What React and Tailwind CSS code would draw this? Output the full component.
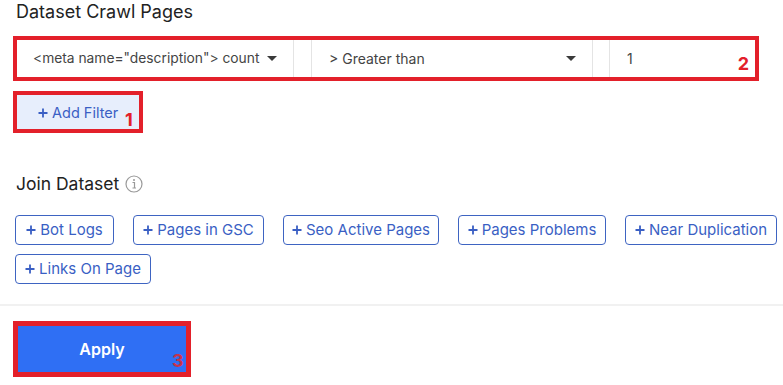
import React from "react";

const Caret = () => (
  <svg width="10" height="6" viewBox="0 0 10 6" className="shrink-0">
    <path d="M0 0 L10 0 L5 5 Z" fill="#3a3a3a" />
  </svg>
);

const Plus = () => (
  <svg width="10" height="10" viewBox="0 0 10 10" className="shrink-0">
    <path d="M5 0.5 V9.5 M0.5 5 H9.5" stroke="currentColor" strokeWidth="1.8" />
  </svg>
);

const JoinBtn = ({ label, w }) => (
  <button className={`h-[30px] ${w} border border-[#3e64c2] rounded-[4px] text-[15px] text-[#3a5fc4] flex items-center justify-center gap-[4px] bg-white`}>
    <Plus />
    <span>{label}</span>
  </button>
);

export default function App() {
  const font = { fontFamily: "Inter, 'Noto Sans', sans-serif" };
  return (
    <div className="w-[783px] h-[385px] bg-white relative overflow-hidden" style={font}>
      <div className="pl-[15px] pr-[4px]">
        <h1 className="text-[18px] leading-[24px] text-[#222] pl-[1px]">Dataset Crawl Pages</h1>

        <div className="relative mt-[12px] -ml-[2px] w-[746px] h-[45px] border-[4px] border-[#e3202a] flex items-stretch">
          <div className="w-[277px] border-r border-[#e4e4e4] flex items-center justify-between pl-[16px] pr-[16px] text-[13.8px] text-[#444]">
            <span>&lt;meta name="description"&gt; count</span>
            <Caret />
          </div>
          <div className="w-[17px]" />
          <div className="w-[282px] border-l border-r border-[#e4e4e4] flex items-center justify-between pl-[17px] pr-[16px] text-[14px] text-[#444]">
            <span>&gt; Greater than</span>
            <Caret />
          </div>
          <div className="w-[16px]" />
          <div className="flex-1 border-l border-[#e4e4e4] flex items-center pl-[17px] text-[14px] text-[#444]">1</div>
          <span className="absolute right-[6px] top-[15px] text-[18px] font-bold text-[#e3202a] leading-none">2</span>
        </div>

        <div className="relative mt-[10px] -ml-[2px] w-[130px] h-[42px] border-[4px] border-[#e3202a] bg-[#e7eefc] flex items-center gap-[4px] pl-[21px] pt-[2px] text-[14.5px] text-[#3a5fc4]">
          <Plus />
          <span>Add Filter</span>
          <span className="absolute left-[108px] top-[16px] text-[18px] font-bold text-[#e3202a] leading-none">1</span>
        </div>

        <div className="mt-[39px] flex items-center gap-[6px] pl-[1px]">
          <span className="text-[17.5px] leading-[24px] text-[#222]">Join Dataset</span>
          <svg width="18" height="18" viewBox="0 0 18 18">
            <circle cx="9" cy="9" r="8" fill="none" stroke="#999" strokeWidth="1.2" />
            <circle cx="9" cy="5" r="1" fill="#999" />
            <path d="M7.5 7.5 H9.5 V13 M7.5 13 H11" fill="none" stroke="#999" strokeWidth="1.2" />
          </svg>
        </div>

        <div className="mt-[19px] flex flex-wrap gap-x-[19px] gap-y-[9px]">
          <JoinBtn label="Bot Logs" w="w-[99px]" />
          <JoinBtn label="Pages in GSC" w="w-[131px]" />
          <JoinBtn label="Seo Active Pages" w="w-[156px]" />
          <JoinBtn label="Pages Problems" w="w-[148px]" />
          <JoinBtn label="Near Duplication" w="w-[152px]" />
          <JoinBtn label="Links On Page" w="w-[136px]" />
        </div>
      </div>

      <div className="mt-[20px] h-[2px] bg-[#f1f1f1]" />

      <div className="pl-[13px] mt-[15px]">
        <div className="relative w-[178px] h-[56px] border-[5px] border-[#e3202a] bg-[#2f6ff4] flex items-center justify-center">
          <span className="text-white text-[16px] font-semibold">Apply</span>
          <span className="absolute left-[154px] top-[26px] text-[18px] font-bold text-[#c8324c] leading-none">3</span>
        </div>
      </div>
    </div>
  );
}
